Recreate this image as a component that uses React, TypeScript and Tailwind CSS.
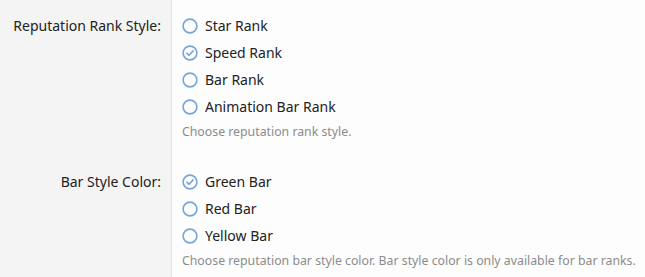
import React from "react";

type Option = { label: string; checked?: boolean };

const sections: { title: string; options: Option[]; help: string }[] = [
  {
    title: "Reputation Rank Style:",
    options: [
      { label: "Star Rank" },
      { label: "Speed Rank", checked: true },
      { label: "Bar Rank" },
      { label: "Animation Bar Rank" },
    ],
    help: "Choose reputation rank style.",
  },
  {
    title: "Bar Style Color:",
    options: [
      { label: "Green Bar", checked: true },
      { label: "Red Bar" },
      { label: "Yellow Bar" },
    ],
    help: "Choose reputation bar style color. Bar style color is only available for bar ranks.",
  },
];

const RadioIcon = ({ checked }: { checked?: boolean }) => (
  <svg width="16" height="16" viewBox="0 0 16 16" className="shrink-0">
    <circle cx="8" cy="8" r="6.9" fill="none" stroke="#77a6d6" strokeWidth="1.6" />
    {checked && (
      <path
        d="M4.9 8.2 L7.1 10.3 L11.1 5.9"
        fill="none"
        stroke="#77a6d6"
        strokeWidth="1.6"
        strokeLinecap="round"
        strokeLinejoin="round"
      />
    )}
  </svg>
);

export default function App() {
  return (
    <div
      className="w-[645px] h-[277px] overflow-hidden bg-[#fdfdfd] text-[#222]"
      style={{ fontFamily: '"Noto Sans", "Open Sans", sans-serif' }}
    >
      <div className="grid grid-cols-[172px_1fr] grid-rows-[auto_1fr] h-full">
        {sections.map((s, i) => (
          <React.Fragment key={s.title}>
            <div
              className={
                "bg-[#f4f4f4] border-r border-[#e4e4e4] text-right pr-[10px] text-[14px] leading-[27px] " +
                (i === 0 ? "pt-[12px]" : "pt-[14px]")
              }
            >
              {s.title}
            </div>
            <div className={"pl-[10px] " + (i === 0 ? "pt-[12px] pb-[12px]" : "pt-[14px]")}>
              {s.options.map((o) => (
                <label key={o.label} className="flex items-center gap-[7px] h-[27px] text-[14px]">
                  <RadioIcon checked={o.checked} />
                  <span>{o.label}</span>
                </label>
              ))}
              <p className="text-[12.3px] text-[#8c8c8c] leading-[20px] mt-[2px] whitespace-nowrap">
                {s.help}
              </p>
            </div>
          </React.Fragment>
        ))}
      </div>
    </div>
  );
}
